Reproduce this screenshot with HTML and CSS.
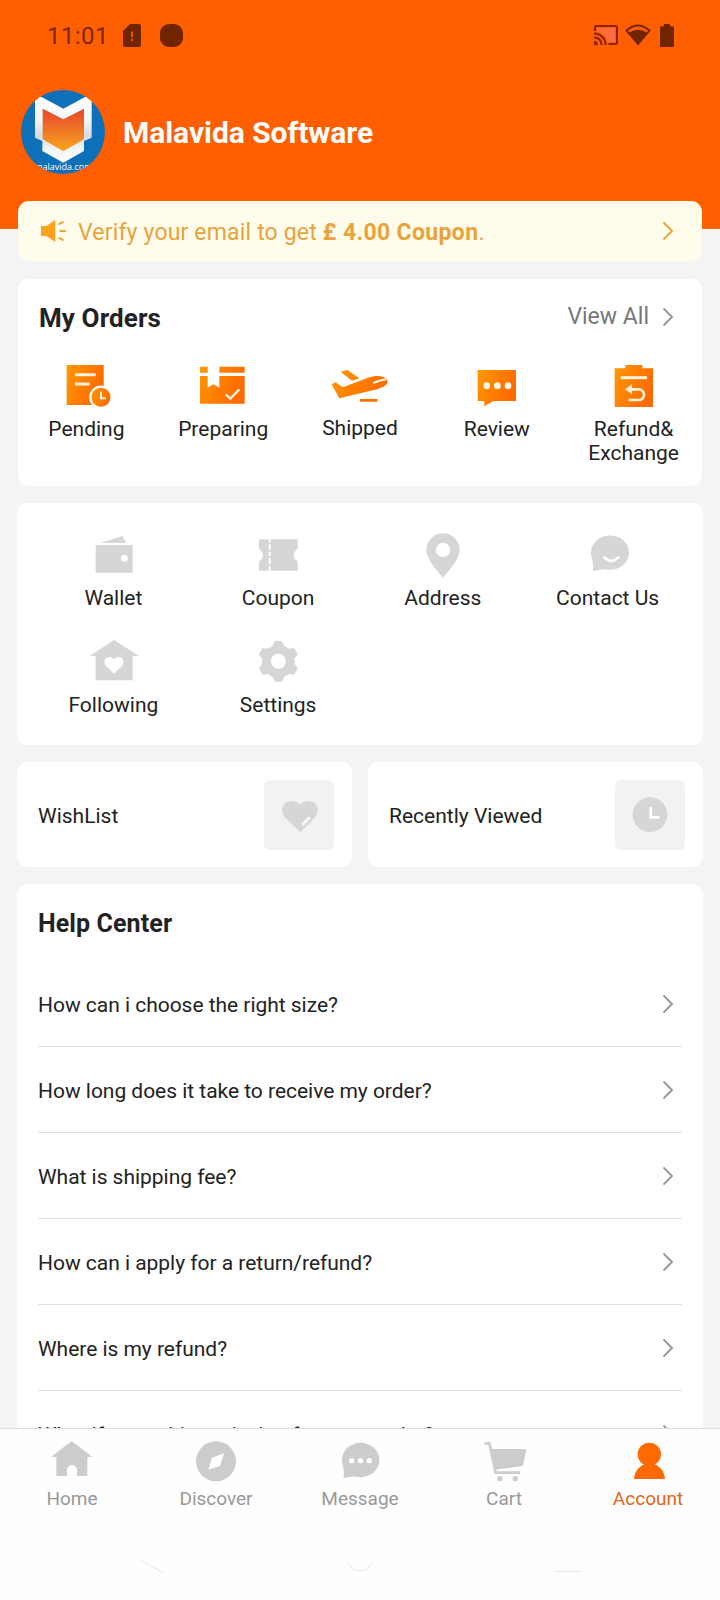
FILE: index.html
```html
<!DOCTYPE html>
<html lang="en">
<head>
<meta charset="utf-8">
<title>Account</title>
<link rel="stylesheet" href="styles.css">
</head>

<body>

<!-- shared gradient and chevron -->
<svg class="defs" width="0" height="0">
  <defs>
    <linearGradient id="orange" x1="0" y1="0" x2="1" y2="0.4">
      <stop offset="0" stop-color="#ff9800"/>
      <stop offset="1" stop-color="#ff6a00"/>
    </linearGradient>
    <linearGradient id="shield" x1="0" y1="0" x2="0" y2="1">
      <stop offset="0" stop-color="#e5452c"/>
      <stop offset="1" stop-color="#f9a61f"/>
    </linearGradient>
    <linearGradient id="silver" x1="0" y1="0" x2="0" y2="1">
      <stop offset="0" stop-color="#ffffff"/>
      <stop offset="0.35" stop-color="#f4f5f8"/>
      <stop offset="0.6" stop-color="#d6dae2"/>
      <stop offset="0.8" stop-color="#f4f5f8"/>
      <stop offset="1" stop-color="#ffffff"/>
    </linearGradient>
    <symbol id="chevron" viewBox="0 0 12 20">
      <path d="M1.5 1.500L10 10L1.5 18.500" fill="none" stroke="currentColor" stroke-width="1.900"/>
    </symbol>
  </defs>
</svg>

<div class="screen">
  <div class="content">

    <div class="header">
      <div class="status">
        <span class="time">11:01</span>
        <svg class="sim" viewBox="0 0 18 23"><path d="M7 0H16a2 2 0 0 1 2 2V21a2 2 0 0 1-2 2H2a2 2 0 0 1-2-2V7z"/><path d="M9 7.500V13M9 14.500V17" stroke="#d9560c" stroke-width="2.200"/></svg>
        <svg class="blob" viewBox="0 0 23 23"><rect width="23" height="23" rx="9"/></svg>
        <span class="grow"></span>
        <svg class="cast" viewBox="0 0 24 20">
          <path d="M3 3H21V17H14Q12 8 3 6z" fill="#ff6c40"/>
          <path d="M1 6V2.500A1.500 1.500 0 0 1 2.500 1H21.500A1.500 1.500 0 0 1 23 2.500V17.500A1.500 1.500 0 0 1 21.500 19H14.500" fill="none" stroke="#8a2100" stroke-width="2"/>
          <path d="M0 8.500A11 11 0 0 1 11.500 20M0 12.500A7 7 0 0 1 7.500 20" fill="none" stroke="#8a2100" stroke-width="2"/>
          <path d="M0 16a4 4 0 0 1 4 4H0z" fill="#8a2100"/>
        </svg>
        <svg class="wifi" viewBox="0 0 26 22">
          <path d="M1.500 6.500Q13-3.500 24.500 6.500L13 20z" fill="none" stroke="#702400" stroke-width="1.800"/>
          <path d="M3.800 8.800Q13 2.500 22.200 8.800L13 20z"/>
        </svg>
        <svg class="battery" viewBox="0 0 14 23"><path d="M4 0H10V2.300H12.500A1.500 1.500 0 0 1 14 3.800V21.500A1.500 1.500 0 0 1 12.500 23H1.500A1.500 1.500 0 0 1 0 21.500V3.800A1.500 1.500 0 0 1 1.500 2.300H4z"/></svg>
      </div>

      <div class="profile">
        <div class="avatar">
          <svg viewBox="0 0 252 252">
            <path d="M42 21L62 21L127 56L192 21L212 21V143L189 153V183L127 218L64 183V153L42 143z" fill="url(#silver)"/>
            <path d="M65 56L127 88L189 56V148L127 184L65 148z" fill="url(#shield)"/>
            <text x="127" y="241" text-anchor="middle">malavida.com</text>
          </svg>
        </div>
        <h1>Malavida Software</h1>
      </div>
    </div>

    <div class="banner">
      <svg class="speaker" viewBox="0 0 75 66">
        <path d="M0 18H16L43 0V66L16 48H0z" fill="#fba31c"/>
        <path d="M53 13L67 5M56 33H74M53 53L67 61" stroke="#f0a42c" stroke-width="6"/>
      </svg>
      <p>Verify your email to get <b>£ 4.00 Coupon</b>.</p>
      <svg class="chevron"><use href="#chevron"/></svg>
    </div>

    <div class="card orders">
      <div class="orders-head">
        <h2>My Orders</h2>
        <a class="view-all">View All <svg class="chevron"><use href="#chevron"/></svg></a>
      </div>
      <ul>
        <li>
          <svg viewBox="0 0 180 156">
            <rect x="32" y="15" width="111" height="120" fill="url(#orange)"/>
            <path d="M57 44H119M57 72H101" stroke="#fff3dc" stroke-width="9"/>
            <circle cx="135" cy="112" r="32" fill="url(#orange)" stroke="#fff" stroke-width="7"/>
            <path d="M135 95V115H150" fill="none" stroke="#fff3dc" stroke-width="6"/>
          </svg>
          Pending
        </li>
        <li>
          <svg viewBox="0 0 180 156">
            <path d="M21 20H44V38H21zM79 20H155V38H79zM21 48H44V83L61 73L79 83V48H155V131H21z" fill="url(#orange)"/>
            <path d="M98 103L112 116L139 88" fill="none" stroke="#fff3dc" stroke-width="7"/>
          </svg>
          Preparing
        </li>
        <li class="shipped">
          <svg viewBox="0 0 180 156">
            <path d="M32 35L52 30L88 55L66 62zM5 73L17 67L38 82L112 54C138 45 156 47 166 54C178 63 173 75 156 82C146 87 138 89 128 91L28 115zM90 117H142V125H90z" fill="url(#orange)"/>
            <path d="M130 70Q144 62 168 58" fill="none" stroke="#fff" stroke-width="6"/>
          </svg>
          Shipped
        </li>
        <li>
          <svg viewBox="0 0 180 156">
            <path d="M32 30H147V123H80L52 139V123H32z" fill="url(#orange)"/>
            <g fill="#fff8ea"><circle cx="59" cy="77" r="10"/><circle cx="91" cy="77" r="10"/><circle cx="123" cy="77" r="10"/></g>
          </svg>
          Review
        </li>
        <li>
          <svg viewBox="0 0 180 156">
            <path d="M32 25H64V15H115V25H147V141H32z" fill="url(#orange)"/>
            <path d="M50 53H129" stroke="#fff3dc" stroke-width="9"/>
            <path d="M72 88H104a16 16 0 0 1 0 32H74" fill="none" stroke="#fff3dc" stroke-width="8"/>
            <path d="M63 88L84 73V103z" fill="#fff3dc"/>
          </svg>
          Refund&amp;<br>Exchange
        </li>
      </ul>
    </div>

    <div class="card services">
      <ul>
        <li>
          <svg viewBox="0 0 180 144"><path d="M38 39H149V122H38zM52 33L118 12L130 33z"/><circle cx="124" cy="79" r="10.500" fill="#fff"/></svg>
          Wallet
        </li>
        <li>
          <svg viewBox="0 0 180 144">
            <path d="M33 22H149V50Q137 58 137 69Q137 80 149 88V116H33V88Q45 80 45 69Q45 58 33 50z"/>
            <path d="M65 22V116" stroke="#fff" stroke-width="6" stroke-dasharray="9 6 17 6 12 6 17 6 15"/>
          </svg>
          Coupon
        </li>
        <li>
          <svg viewBox="0 0 180 144"><path d="M90 137C70 112 40 82 40 54a50 50 0 0 1 100 0C140 82 110 112 90 137z"/><circle cx="90" cy="54" r="21.500" fill="#fff"/></svg>
          Address
        </li>
        <li>
          <svg viewBox="0 0 180 144">
            <ellipse cx="96" cy="62" rx="57" ry="51.500"/><path d="M41 78Q47 92 45 117Q62 113 84 111z"/>
            <path d="M79 76Q100 97 121 76" fill="none" stroke="#fff" stroke-width="8" stroke-linecap="round"/>
          </svg>
          Contact Us
        </li>
        <li>
          <svg viewBox="0 0 180 144">
            <path d="M20 51L93 3L168 51H149V124H38V51z"/>
            <path d="M93 104L69 81C60 70 65 54 79 54Q88 54 93 61Q98 54 107 54C121 54 126 70 117 81z" fill="#fff"/>
          </svg>
          Following
        </li>
        <li>
          <svg viewBox="0 0 180 144">
            <circle cx="91" cy="67" r="49"/>
            <path id="teeth" d="M80 6H102L111 28V106L102 128H80L71 106V28z"/>
            <use href="#teeth" transform="rotate(60 91 67)"/>
            <use href="#teeth" transform="rotate(120 91 67)"/>
            <circle cx="91" cy="67" r="22.500" fill="#fff"/>
          </svg>
          Settings
        </li>
      </ul>
    </div>

    <div class="duo">
      <div class="card">
        <span>WishList</span>
        <svg viewBox="0 0 210 210">
          <path d="M109 156L63 113C46 92 57 63 82 63Q98 63 108 74Q118 63 134 63C159 63 170 92 153 113z"/>
          <path d="M115 135L137 112" stroke="#f8f8f8" stroke-width="9"/>
        </svg>
      </div>
      <div class="card">
        <span>Recently Viewed</span>
        <svg viewBox="0 0 210 210">
          <circle cx="105" cy="104" r="52"/>
          <path d="M107 81V112H133" fill="none" stroke="#fff" stroke-width="8"/>
        </svg>
      </div>
    </div>

    <div class="card help">
      <h2>Help Center</h2>
      <ul>
        <li><span>How can i choose the right size?</span> <svg class="chevron"><use href="#chevron"/></svg></li>
        <li><span>How long does it take to receive my order?</span> <svg class="chevron"><use href="#chevron"/></svg></li>
        <li><span>What is shipping fee?</span> <svg class="chevron"><use href="#chevron"/></svg></li>
        <li><span>How can i apply for a return/refund?</span> <svg class="chevron"><use href="#chevron"/></svg></li>
        <li><span>Where is my refund?</span> <svg class="chevron"><use href="#chevron"/></svg></li>
        <li><span>What if something missing from my order?</span> <svg class="chevron"><use href="#chevron"/></svg></li>
      </ul>
    </div>

  </div>

  <div class="bottom">
    <ul class="tabs">
      <li>
        <svg viewBox="0 0 144 144"><path d="M9 63L71 15L133 63H118V120H87V102a15 15 0 0 0-30 0V120H25V63z"/></svg>
        Home
      </li>
      <li>
        <svg viewBox="0 0 144 144"><circle cx="72" cy="76" r="60"/><path d="M96 52L84 90L49 101L60 65z" fill="#fff"/></svg>
        Discover
      </li>
      <li>
        <svg viewBox="0 0 144 144">
          <ellipse cx="74" cy="72" rx="56" ry="51.500"/><path d="M20 86Q26 104 22 127Q40 121 64 122z"/>
          <g fill="#fff"><circle cx="47" cy="74" r="8"/><circle cx="74" cy="74" r="8"/><circle cx="100" cy="74" r="8"/></g>
        </svg>
        Message
      </li>
      <li>
        <svg viewBox="0 0 144 144">
          <path d="M30 39H139L129 90L44 101z"/>
          <path d="M14 22H28L47 110H120" fill="none" stroke="#ccc" stroke-width="8"/>
          <circle cx="59" cy="128" r="8"/><circle cx="106" cy="128" r="8"/>
        </svg>
        Cart
      </li>
      <li class="active">
        <svg viewBox="0 0 144 144"><circle cx="76" cy="55" r="35"/><path d="M30 129C32 107 43 93 61 85H92C110 93 121 107 123 129z"/></svg>
        Account
      </li>
    </ul>
    <div class="sysnav">
      <svg viewBox="0 0 28 28"><path d="M1 13.500L26 0V27z"/></svg>
      <svg viewBox="0 0 28 28"><circle cx="14" cy="13" r="12.500"/></svg>
      <svg viewBox="0 0 28 28"><rect x="1" y="0" width="26" height="26" rx="2"/></svg>
    </div>
  </div>
</div>

</body>
</html>
```
FILE: styles.css
```css
body {
  margin: 0;
  font: 21px/24px Roboto, sans-serif;
  color: #222;
  background: #f4f4f4;
}

ul, h1, h2, p {
  margin: 0;
  padding: 0;
  list-style: none;
}

svg {
  display: block;
  flex: none;
}

.defs {
  position: absolute;
}

.screen {
  display: flex;
  flex-direction: column;
  width: 720px;
  height: 1600px;
  overflow: hidden;
}

.content {
  height: 1428px;
  overflow: hidden;
}

.grow {
  flex: 1;
}

.card {
  background: #fff;
  border-radius: 11px;
}

.chevron {
  width: 12px;
  height: 20px;
}

/* header */

.header {
  height: 229px;
  background: #ff5f00;
}

.status {
  display: flex;
  align-items: center;
  height: 70px;
  padding: 0 46px 0 47px;
  color: #7c2600;
  font-size: 24px;
  letter-spacing: 0.4px;
  fill: #702400;
}

  .time {
    width: 76px;
    padding-top: 2px;
  }

  .sim {
    width: 18px;
    height: 23px;
    margin-right: 19px;
  }

  .blob {
    width: 23px;
    height: 23px;
  }

  .cast {
    width: 24px;
    height: 20px;
    margin-right: 7px;
  }

  .wifi {
    width: 26px;
    height: 22px;
    margin-right: 9px;
  }

  .battery {
    width: 14px;
    height: 23px;
  }

.profile {
  display: flex;
  align-items: center;
  padding: 20px 21px 0;
}

  .avatar {
    width: 84px;
    height: 84px;
    margin-right: 18px;
    border-radius: 50%;
    overflow: hidden;
    background: #0e70b8;
  }

  .avatar text {
    font: 27px "Open Sans", sans-serif;
    fill: #fff;
  }

  .profile h1 {
    padding-top: 2px;
    font-size: 30px;
    line-height: 36px;
    letter-spacing: -0.05px;
    color: #fff;
  }

.banner {
  position: relative;
  display: flex;
  align-items: center;
  height: 60px;
  margin: -28px 18px 18px;
  padding: 0 28px 0 23px;
  box-sizing: border-box;
  border-radius: 11px;
  background: #fffcec;
  color: #e8a33a;
}

  .speaker {
    width: 25px;
    height: 22px;
    margin-right: 12px;
  }

  .banner p {
    flex: 1;
    padding-top: 3px;
    font-size: 23px;
    letter-spacing: 0.17px;
  }

  .banner b {
    letter-spacing: 0.35px;
  }

/* orders */

.orders {
  height: 207px;
  margin: 0 18px 17px;
}

.orders-head {
  display: flex;
  justify-content: space-between;
  align-items: center;
  height: 76px;
  padding: 0 28px 0 21px;
}

h2 {
  font-size: 25px;
  line-height: 30px;
  letter-spacing: 0.1px;
}

.orders h2 {
  padding-top: 1px;
  font-size: 26px;
}

.view-all {
  display: flex;
  align-items: center;
  gap: 13px;
  font-size: 23px;
  color: #777;
}

.orders ul {
  display: grid;
  grid-template-columns: repeat(5, 1fr);
  padding-top: 5px;
  text-align: center;
}

  .orders li svg {
    width: 60px;
    height: 52px;
    margin: 0 auto 5px;
  }

  .orders .shipped svg {
    margin-bottom: 4px;
  }

/* services */

.services {
  height: 242px;
  margin: 0 17px 17px;
  padding: 29px 13px 0 14px;
  box-sizing: border-box;
}

.services ul {
  display: grid;
  grid-template-columns: repeat(4, 1fr);
  grid-auto-rows: 107px;
  text-align: center;
}

  .services li svg {
    width: 60px;
    height: 48px;
    margin: 0 auto 6px;
    fill: #d6d6d6;
  }

/* wishlist, recently viewed */

.duo {
  display: flex;
  gap: 16px;
  margin: 0 17px 17px;
}

  .duo .card {
    flex: 1;
    display: flex;
    align-items: center;
    justify-content: space-between;
    height: 105px;
    padding: 0 18px 0 21px;
  }

  .duo span, .help span {
    padding-top: 2px;
  }

  .duo svg {
    width: 70px;
    height: 70px;
    border-radius: 6px;
    background: #f2f2f2;
    fill: #d6d6d6;
  }

/* help center */

.help {
  margin: 0 17px;
  padding: 25px 21px 0;
}

  .help h2 {
    height: 52px;
  }

  .help li {
    display: flex;
    align-items: center;
    justify-content: space-between;
    height: 86px;
    padding-right: 8px;
    box-sizing: border-box;
    border-bottom: 1px solid #e2e2e2;
  }

  .help li span {
    letter-spacing: -0.03px;
  }

  .help .chevron, .view-all .chevron {
    color: #999;
  }

/* bottom bar */

.bottom {
  height: 172px;
  box-sizing: border-box;
  border-top: 1px solid #dedede;
  background: #fefefe;
}

.tabs {
  display: flex;
  height: 105px;
  padding-top: 7px;
  font-size: 19px;
  line-height: 22px;
  text-align: center;
  color: #999;
}

  .tabs li {
    flex: 1;
  }

  .tabs svg {
    width: 48px;
    height: 48px;
    margin: 0 auto 4px;
    fill: #ccc;
  }

  .tabs .active {
    color: #e0661c;
  }

  .tabs .active svg {
    fill: #ff6a00;
  }

.sysnav {
  display: flex;
  justify-content: space-between;
  padding: 4px 138px 0 137px;
}

  .sysnav svg {
    width: 28px;
    height: 28px;
    fill: #fefefe;
    overflow: visible;
    filter: drop-shadow(0 1.5px 0.7px rgba(0, 0, 0, 0.1));
  }
```
